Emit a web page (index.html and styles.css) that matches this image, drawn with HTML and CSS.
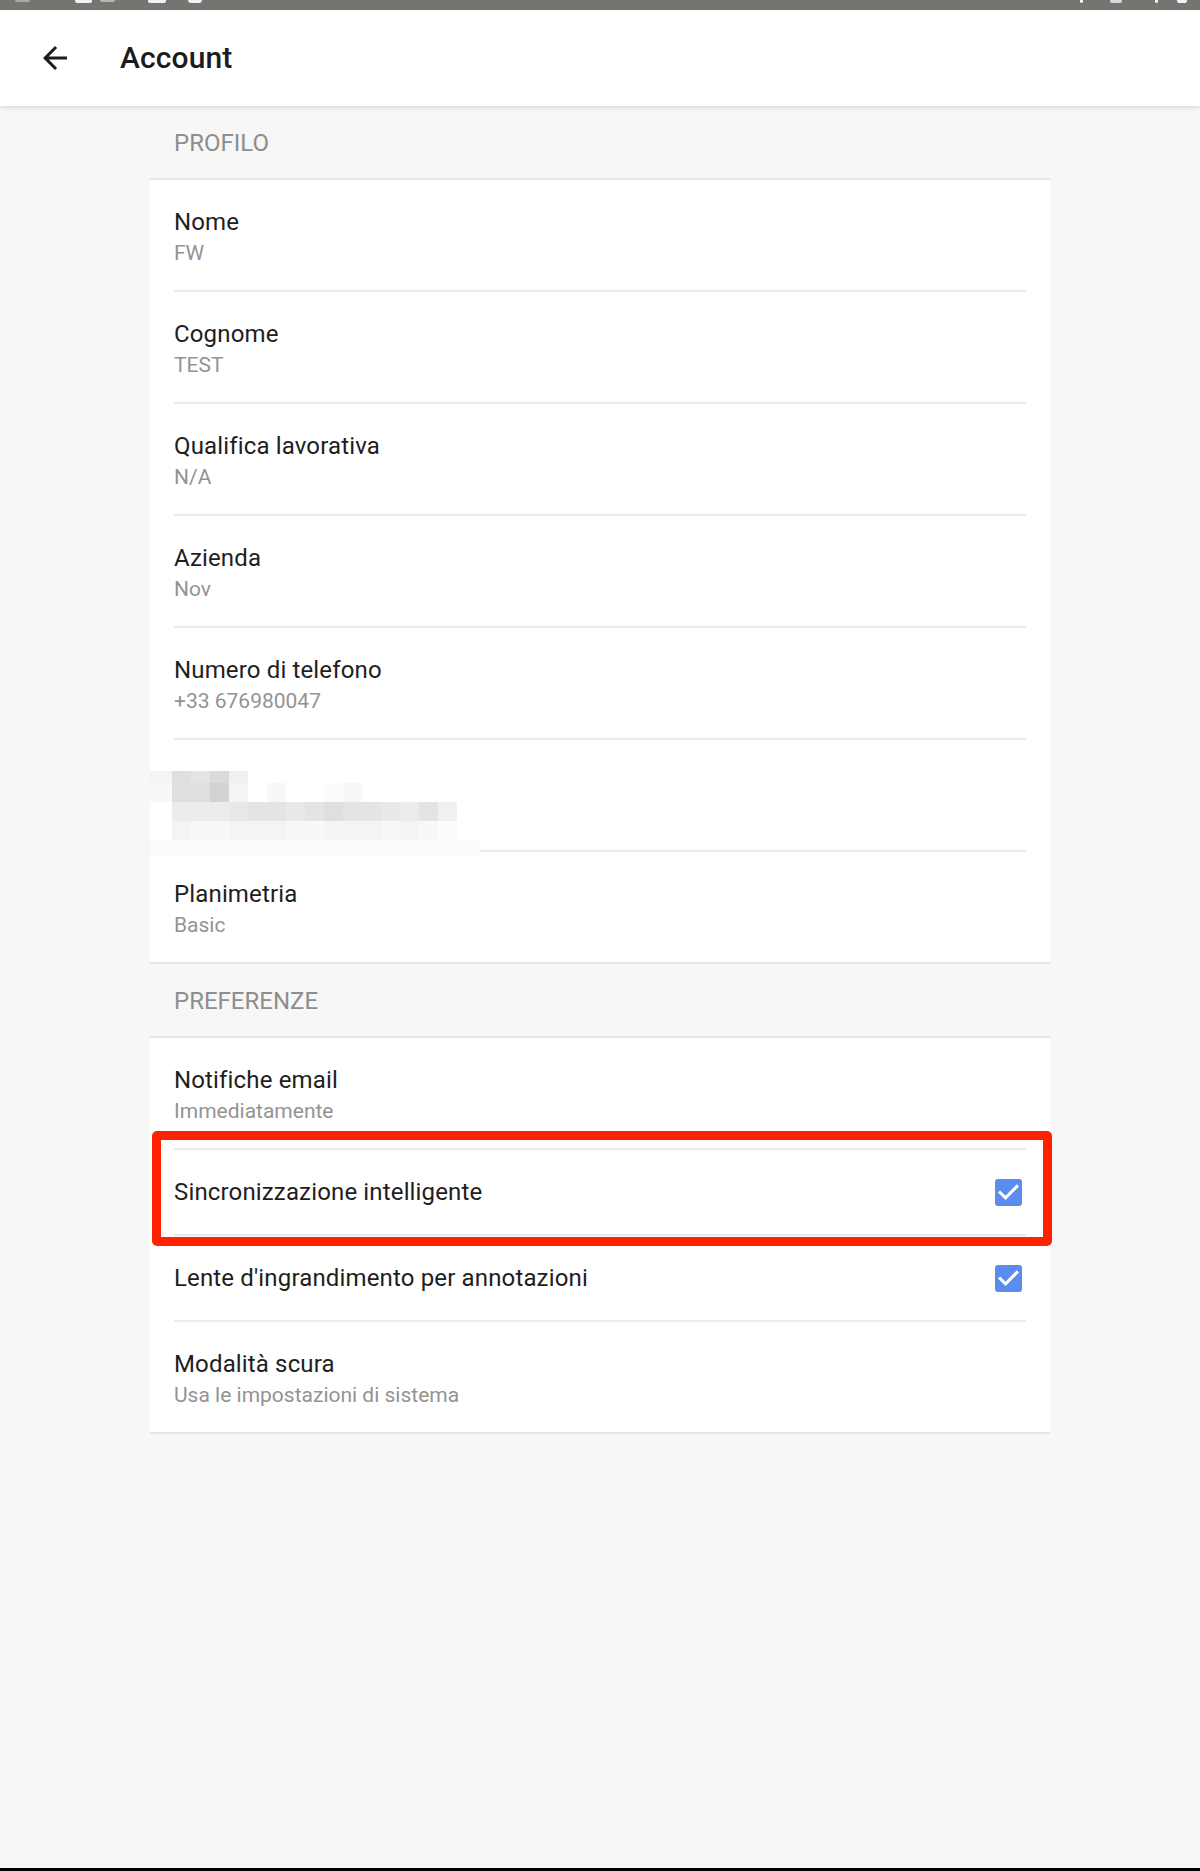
FILE: index.html
```html
<!DOCTYPE html>
<html lang="it">
<head>
<meta charset="utf-8">
<title>Account</title>
<link rel="stylesheet" href="styles.css">
</head>
<body>
<div class="screen">
  <div class="statusbar">
    <div class="sb-group sb-left">
      <span class="mk mk-a"></span>
      <span class="mk mk-b"></span>
      <span class="mk mk-c"></span>
      <span class="mk mk-d"></span>
      <span class="mk mk-e"></span>
    </div>
    <div class="sb-group sb-right">
      <span class="mk mk-f"></span>
      <span class="mk mk-g"></span>
      <span class="mk mk-h"></span>
      <span class="mk mk-i"></span>
    </div>
  </div>

  <header class="appbar">
    <svg class="back" viewBox="0 0 24 24" width="36" height="36" aria-hidden="true">
      <path d="M20 11H7.83l5.59-5.59L12 4l-8 8 8 8 1.41-1.41L7.83 13H20v-2z" fill="#1c1c1c"/>
    </svg>
    <h1 class="title">Account</h1>
  </header>

  <main class="content">
    <section class="group">
      <div class="category">PROFILO</div>
      <div class="card">
        <div class="pref"><div class="pref-inner">
          <div class="pref-title">Nome</div>
          <div class="pref-summary">FW</div>
        </div></div>
        <div class="pref"><div class="pref-inner">
          <div class="pref-title">Cognome</div>
          <div class="pref-summary">TEST</div>
        </div></div>
        <div class="pref"><div class="pref-inner">
          <div class="pref-title">Qualifica lavorativa</div>
          <div class="pref-summary">N/A</div>
        </div></div>
        <div class="pref"><div class="pref-inner">
          <div class="pref-title">Azienda</div>
          <div class="pref-summary">Nov</div>
        </div></div>
        <div class="pref"><div class="pref-inner">
          <div class="pref-title">Numero di telefono</div>
          <div class="pref-summary">+33 676980047</div>
        </div></div>
        <div class="pref redacted">
          <div class="pref-inner blank"></div>
          <div class="blob" aria-hidden="true">
            <span class="g8"></span><span class="g3"></span><span class="g4"></span><span class="g2"></span><span class="g7"></span><span class="w s12"></span>
            <span class="g9"></span><span class="g3"></span><span class="g3"></span><span class="g1"></span><span class="g8"></span><span class="w"></span><span class="g9"></span><span class="w"></span><span class="w"></span><span class="g10"></span><span class="g9"></span><span class="w s6"></span>
            <span class="w"></span><span class="g6"></span><span class="g6"></span><span class="g6"></span><span class="g5"></span><span class="g4"></span><span class="g4"></span><span class="g5"></span><span class="g4"></span><span class="g3"></span><span class="g4"></span><span class="g4"></span><span class="g5"></span><span class="g6"></span><span class="g4"></span><span class="g7"></span><span class="w"></span>
            <span class="w"></span><span class="g8"></span><span class="g9"></span><span class="g9"></span><span class="g8"></span><span class="g8"></span><span class="g8"></span><span class="g9"></span><span class="g9"></span><span class="g8"></span><span class="g8"></span><span class="g8"></span><span class="g9"></span><span class="g8"></span><span class="g9"></span><span class="g10"></span><span class="w"></span>
            <span class="g10 s17"></span>
          </div>
        </div>
        <div class="pref last"><div class="pref-inner">
          <div class="pref-title">Planimetria</div>
          <div class="pref-summary">Basic</div>
        </div></div>
      </div>
    </section>

    <section class="group">
      <div class="category">PREFERENZE</div>
      <div class="card">
        <div class="pref"><div class="pref-inner">
          <div class="pref-title">Notifiche email</div>
          <div class="pref-summary">Immediatamente</div>
        </div></div>
        <div class="pref"><div class="pref-inner single">
          <div class="pref-title">Sincronizzazione intelligente</div>
          <svg class="check" viewBox="3 3 18 18" width="27" height="27" aria-hidden="true">
            <rect x="3" y="3" width="18" height="18" rx="2" fill="#5b8def"/>
            <path d="M10 17l-5-5 1.41-1.41L10 14.17l7.59-7.59L19 8l-9 9z" fill="#fff"/>
          </svg>
        </div></div>
        <div class="pref"><div class="pref-inner single">
          <div class="pref-title">Lente d'ingrandimento per annotazioni</div>
          <svg class="check" viewBox="3 3 18 18" width="27" height="27" aria-hidden="true">
            <rect x="3" y="3" width="18" height="18" rx="2" fill="#5b8def"/>
            <path d="M10 17l-5-5 1.41-1.41L10 14.17l7.59-7.59L19 8l-9 9z" fill="#fff"/>
          </svg>
        </div></div>
        <div class="pref last"><div class="pref-inner">
          <div class="pref-title">Modalità scura</div>
          <div class="pref-summary">Usa le impostazioni di sistema</div>
        </div></div>
        <div class="highlight" aria-hidden="true"></div>
      </div>
    </section>
  </main>

  <div class="navbar"></div>
</div>
</body>
</html>
```

FILE: styles.css
```css
* { box-sizing: border-box; }

html, body {
  margin: 0;
  padding: 0;
}

body {
  font-family: Roboto, "Noto Sans", "Liberation Sans", sans-serif;
  background: #f7f7f7;
  color: rgba(0, 0, 0, 0.87);
}

.screen {
  display: flex;
  flex-direction: column;
  min-height: 1871px;
}

/* status bar */
.statusbar {
  height: 10px;
  background: #737570;
  display: flex;
  justify-content: space-between;
  align-items: flex-start;
  flex: none;
}

.sb-group {
  display: flex;
  align-items: flex-start;
}

.mk {
  display: block;
  height: 3px;
  background: #f2f2f2;
  border-radius: 0 0 2px 2px;
}

.mk-a { margin-left: 15px; width: 15px; background: #a9aaa7; height: 2px; }
.mk-b { margin-left: 45px; width: 17px; }
.mk-c { margin-left: 8px; width: 15px; background: #b7b8b5; height: 2px; }
.mk-d { margin-left: 33px; width: 18px; }
.mk-e { margin-left: 22px; width: 14px; border-radius: 0 0 7px 7px; }

.sb-right { padding-right: 13px; }
.mk-f { width: 3px; height: 3px; }
.mk-g { margin-left: 27px; width: 12px; background: #d8d8d6; }
.mk-h { margin-left: 33px; width: 3px; }
.mk-i { margin-left: 19px; width: 10px; }

/* app bar */
.appbar {
  height: 96px;
  background: #ffffff;
  display: flex;
  align-items: center;
  padding-left: 37px;
  box-shadow: 0 2px 4px rgba(0, 0, 0, 0.12);
  position: relative;
  z-index: 2;
  flex: none;
}

.back {
  display: block;
  flex: none;
}

.title {
  margin: 0 0 0 47px;
  font-size: 30px;
  font-weight: 500;
  line-height: 36px;
  color: #1c1c1c;
  letter-spacing: 0.1px;
}

/* content */
.content {
  flex: 1;
}

.group {
  width: 900px;
  margin: 0 auto;
}

.category {
  height: 72px;
  padding: 21px 24px 0;
  font-size: 24px;
  line-height: 32px;
  color: #8e8e8e;
}

.card {
  background: #ffffff;
  border-top: 2px solid #e6e6e6;
  border-bottom: 2px solid #e6e6e6;
  position: relative;
}

.pref {
  padding: 0 24px;
}

.pref-inner {
  padding: 26px 0 22px;
  border-bottom: 2px solid #ebebeb;
}

.pref.last .pref-inner {
  border-bottom: none;
}

.pref-inner.single {
  height: 86px;
  padding: 0 4px 0 0;
  display: flex;
  align-items: center;
  justify-content: space-between;
}

.pref-inner.blank {
  height: 112px;
  padding: 0;
}

.pref-title {
  font-size: 24px;
  line-height: 32px;
  color: #1e1e1e;
  letter-spacing: 0.15px;
}

.pref-summary {
  font-size: 21px;
  line-height: 30px;
  color: #939393;
}

.check {
  display: block;
  flex: none;
}

/* redacted (pixelated) row */
.redacted {
  position: relative;
}

.blob {
  position: absolute;
  left: 0;
  top: 31px;
  width: 330px;
  height: 86px;
  display: grid;
  grid-template-columns: 22px repeat(15, 19px) 23px;
  grid-template-rows: 12px 19px 19px 19px 17px;
}

.blob span { display: block; }
.blob .s6 { grid-column: span 6; }
.blob .s12 { grid-column: span 12; }
.blob .s17 { grid-column: span 17; }

.w   { background: #ffffff; }
.g1  { background: #d3d3d3; }
.g2  { background: #dadada; }
.g3  { background: #dfdfdf; }
.g4  { background: #e4e4e4; }
.g5  { background: #e8e8e8; }
.g6  { background: #ececec; }
.g7  { background: #f0f0f0; }
.g8  { background: #f4f4f4; }
.g9  { background: #f8f8f8; }
.g10 { background: #fbfbfb; }

/* red annotation frame */
.highlight {
  position: absolute;
  left: 2px;
  top: 93px;
  width: 900px;
  height: 115px;
  border: 9px solid #ff2200;
  border-radius: 5px;
  pointer-events: none;
}

.navbar {
  height: 3px;
  background: #000000;
  flex: none;
}
```
